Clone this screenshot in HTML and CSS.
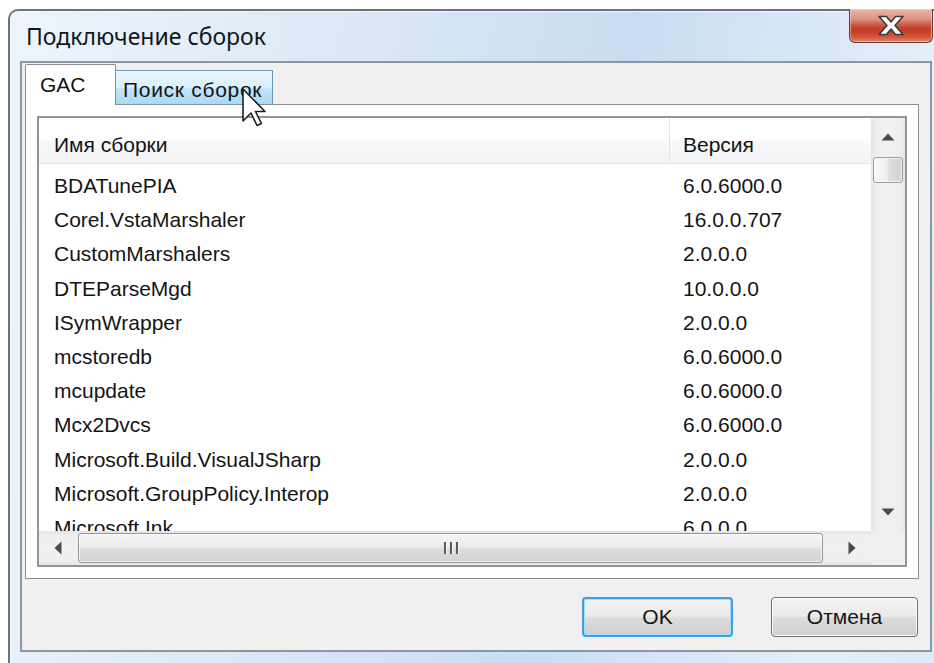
FILE: index.html
```html
<!DOCTYPE html>
<html lang="ru">
<head>
<meta charset="utf-8">
<title>Подключение сборок</title>
<link rel="stylesheet" href="styles.css">
</head>
<body>
<div class="window">
  <div class="titlebar">
    <span class="title">Подключение сборок</span>
    <button class="close" type="button" aria-label="Закрыть">
      <svg width="28" height="21" viewBox="0 0 28 21">
        <polygon points="2,1.5 9.5,1.5 14,7 18.5,1.5 26,1.5 18,10.5 26,19.5 18.5,19.5 14,14 9.5,19.5 2,19.5 10,10.5" fill="#ffffff" stroke="#3c3c3c" stroke-width="1.6" stroke-linejoin="round"/>
      </svg>
    </button>
  </div>
  <div class="frame">
    <div class="client">
      <div class="tabctl">
        <div class="tabstrip">
          <div class="tab tab-active">GAC</div>
          <div class="tab tab-hover">Поиск сборок</div>
        </div>
        <div class="tabpage">
          <div class="listview">
            <div class="lv-body">
              <div class="lv-header">
                <div class="lv-name lv-hcell">Имя сборки</div>
                <div class="lv-ver">Версия</div>
              </div>
              <div class="lv-rows">
                <div class="lv-row"><span class="lv-name">BDATunePIA</span><span class="lv-ver">6.0.6000.0</span></div>
                <div class="lv-row"><span class="lv-name">Corel.VstaMarshaler</span><span class="lv-ver">16.0.0.707</span></div>
                <div class="lv-row"><span class="lv-name">CustomMarshalers</span><span class="lv-ver">2.0.0.0</span></div>
                <div class="lv-row"><span class="lv-name">DTEParseMgd</span><span class="lv-ver">10.0.0.0</span></div>
                <div class="lv-row"><span class="lv-name">ISymWrapper</span><span class="lv-ver">2.0.0.0</span></div>
                <div class="lv-row"><span class="lv-name">mcstoredb</span><span class="lv-ver">6.0.6000.0</span></div>
                <div class="lv-row"><span class="lv-name">mcupdate</span><span class="lv-ver">6.0.6000.0</span></div>
                <div class="lv-row"><span class="lv-name">Mcx2Dvcs</span><span class="lv-ver">6.0.6000.0</span></div>
                <div class="lv-row"><span class="lv-name">Microsoft.Build.VisualJSharp</span><span class="lv-ver">2.0.0.0</span></div>
                <div class="lv-row"><span class="lv-name">Microsoft.GroupPolicy.Interop</span><span class="lv-ver">2.0.0.0</span></div>
                <div class="lv-row"><span class="lv-name">Microsoft.Ink</span><span class="lv-ver">6.0.0.0</span></div>
              </div>
            </div>
            <div class="vscroll">
              <div class="sb-btn-v">
                <svg width="14" height="8" viewBox="0 0 14 8"><polygon points="7,0.5 13.5,7.5 0.5,7.5" fill="#4a4a4a"/></svg>
              </div>
              <div class="vthumb"></div>
              <div class="sb-fill"></div>
              <div class="sb-btn-v">
                <svg width="14" height="8" viewBox="0 0 14 8"><polygon points="0.5,0.5 13.5,0.5 7,7.5" fill="#4a4a4a"/></svg>
              </div>
            </div>
            <div class="hscroll">
              <div class="sb-btn-h sb-left">
                <svg width="8" height="14" viewBox="0 0 8 14"><polygon points="7.5,0.5 7.5,13.5 0.5,7" fill="#4a4a4a"/></svg>
              </div>
              <div class="hthumb">
                <svg width="16" height="14" viewBox="0 0 16 14">
                  <rect x="1" y="1" width="2" height="12" fill="#5a5a5a"/>
                  <rect x="3" y="1" width="1" height="12" fill="#f8f8f8"/>
                  <rect x="7" y="1" width="2" height="12" fill="#5a5a5a"/>
                  <rect x="9" y="1" width="1" height="12" fill="#f8f8f8"/>
                  <rect x="13" y="1" width="2" height="12" fill="#5a5a5a"/>
                  <rect x="15" y="1" width="1" height="12" fill="#f8f8f8"/>
                </svg>
              </div>
              <div class="sb-fill"></div>
              <div class="sb-btn-h sb-right">
                <svg width="8" height="14" viewBox="0 0 8 14"><polygon points="0.5,0.5 7.5,7 0.5,13.5" fill="#4a4a4a"/></svg>
              </div>
            </div>
            <div class="corner"></div>
          </div>
        </div>
      </div>
      <div class="buttons">
        <button class="btn btn-default" type="button">OK</button>
        <button class="btn btn-cancel" type="button">Отмена</button>
      </div>
    </div>
  </div>
</div>
<svg class="cursor" width="26" height="40" viewBox="0 0 26 40">
  <polygon points="1,1 1,33 9,25 15,37.5 19.5,35.5 13.5,23.5 23,23.5" fill="#ffffff" stroke="#1e1e1e" stroke-width="1.6" stroke-linejoin="round"/>
</svg>
</body>
</html>
```

FILE: styles.css
```css
html, body {
  margin: 0;
  padding: 0;
}

body {
  position: relative;
  width: 934px;
  height: 663px;
  overflow: hidden;
  background: #ffffff;
  font-family: "Liberation Sans", Arial, sans-serif;
  color: #141414;
}

/* Aero window frame */
.window {
  box-sizing: border-box;
  width: 936px;
  height: 670px;
  margin: 9px 0 0 8px;
  border: 2px solid #6a737d;
  border-bottom: none;
  border-radius: 10px 10px 0 0;
  background: linear-gradient(100deg, #eef4fb 0%, #e2ecf8 22%, #d3e3f4 45%, #c9dcf1 60%, #d6e6f6 74%, #e3eef9 88%, #dbe8f6 100%);
  box-shadow: inset 0 0 0 1px rgba(255, 255, 255, 0.6);
  display: flex;
  flex-direction: column;
}

.titlebar {
  height: 50px;
  flex: none;
  display: flex;
  align-items: flex-start;
  justify-content: space-between;
  padding-left: 16px;
}

.title {
  font-family: "Noto Sans", "Liberation Sans", sans-serif;
  font-size: 23px;
  line-height: 30px;
  margin-top: 10px;
  color: #101820;
  white-space: nowrap;
}

.close {
  box-sizing: border-box;
  width: 84px;
  height: 34px;
  margin: -2px 9px 0 0;
  padding: 0;
  border: 1px solid #6d3a30;
  border-top: none;
  border-radius: 0 0 6px 6px;
  background: linear-gradient(#eab6aa 0%, #dc9484 30%, #cc5a43 48%, #c23b25 62%, #cf5138 82%, #e3846a 100%);
  box-shadow: inset 0 0 0 1px rgba(255, 220, 210, 0.5);
  display: flex;
  align-items: center;
  justify-content: center;
}

.frame {
  flex: none;
  padding: 0 10px;
}

/* Dialog client area */
.client {
  box-sizing: border-box;
  width: 912px;
  height: 591px;
  border: 2px solid #8c97a4;
  background: #f0f0f0;
  display: flex;
  flex-direction: column;
}

.tabctl {
  margin: 1px 11px 0 3px;
  display: flex;
  flex-direction: column;
}

.tabstrip {
  height: 41px;
  display: flex;
  align-items: flex-end;
}

.tab {
  box-sizing: border-box;
  font-size: 21px;
  line-height: 24px;
  border: 1px solid #898c95;
  border-bottom: none;
  white-space: nowrap;
}

.tab-active {
  position: relative;
  z-index: 1;
  width: 91px;
  height: 41px;
  padding: 8px 0 0 14px;
  background: #ffffff;
  border-radius: 2px 2px 0 0;
}

.tab-hover {
  width: 158px;
  height: 35px;
  margin-left: -1px;
  padding: 7px 0 0 7px;
  letter-spacing: 0.7px;
  border-color: #6f97bd;
  background: linear-gradient(#eaf6fd 0%, #d9f0fc 48%, #c2e4f8 52%, #a9d8f3 100%);
}

.tabpage {
  box-sizing: border-box;
  height: 475px;
  margin-top: -1px;
  border: 1px solid #898c95;
  background: #ffffff;
  padding: 11px;
}

/* List view with scroll bars */
.listview {
  box-sizing: border-box;
  height: 451px;
  border: 2px solid #8f959d;
  background: #ffffff;
  display: grid;
  grid-template-columns: 1fr 34px;
  grid-template-rows: 1fr 34px;
}

.lv-body {
  overflow: hidden;
  font-size: 21px;
  white-space: nowrap;
}

.lv-header {
  box-sizing: border-box;
  height: 46px;
  padding-top: 8px;
  line-height: 37px;
  display: flex;
  border-bottom: 1px solid #e3e5e8;
  background: linear-gradient(#ffffff 0%, #ffffff 45%, #f7f8f9 55%, #f3f4f6 100%);
}

.lv-name {
  box-sizing: border-box;
  flex: none;
  width: 631px;
  padding-left: 15px;
}

.lv-ver {
  box-sizing: border-box;
  flex: none;
  width: 201px;
  padding-left: 13px;
}

.lv-hcell {
  border-right: 1px solid #e1e4e8;
  margin-top: -8px;
  padding-top: 8px;
}

.lv-rows {
  padding-top: 5px;
}

.lv-row {
  display: flex;
  height: 34.2px;
  line-height: 34.2px;
}

.vscroll {
  display: flex;
  flex-direction: column;
  background: linear-gradient(to right, #e3e3e3 0%, #eeeeee 12%, #f1f1f1 50%, #eeeeee 88%, #e4e4e4 100%);
}

.sb-btn-v {
  height: 38px;
  flex: none;
  display: flex;
  align-items: center;
  justify-content: center;
}

.sb-fill {
  flex: 1;
}

.vthumb {
  box-sizing: border-box;
  flex: none;
  height: 26px;
  margin: 1px 2px 0;
  border: 1px solid #999999;
  border-radius: 3px;
  background: linear-gradient(to right, #f7f7f7 0%, #efefef 45%, #dddddd 55%, #d3d3d3 100%);
  box-shadow: inset 0 0 0 1px rgba(255, 255, 255, 0.7);
}

.hscroll {
  display: flex;
  background: linear-gradient(#e3e3e3 0%, #eeeeee 12%, #f1f1f1 50%, #eeeeee 88%, #e4e4e4 100%);
}

.sb-btn-h {
  flex: none;
  display: flex;
  align-items: center;
  justify-content: center;
}

.sb-left {
  width: 38px;
}

.sb-right {
  width: 39px;
}

.hthumb {
  box-sizing: border-box;
  flex: none;
  width: 745px;
  margin: 2px 0 2px 1px;
  border: 1px solid #979797;
  border-radius: 3px;
  background: linear-gradient(#f5f5f5 0%, #ececec 45%, #dcdcdc 55%, #d2d2d2 100%);
  box-shadow: inset 0 0 0 1px rgba(255, 255, 255, 0.7);
  display: flex;
  align-items: center;
  justify-content: center;
}

.corner {
  background: #f0f0f0;
}

/* Dialog buttons */
.buttons {
  display: flex;
  justify-content: flex-end;
  gap: 38px;
  padding: 18px 12px 0 0;
}

.btn {
  box-sizing: border-box;
  height: 40px;
  padding: 0;
  font-family: "Liberation Sans", Arial, sans-serif;
  font-size: 21px;
  color: #141414;
  border: 1px solid #707070;
  border-radius: 4px;
  background: linear-gradient(#f3f3f3 0%, #ebebeb 48%, #dddddd 52%, #cfcfcf 100%);
  box-shadow: inset 0 0 0 1px rgba(255, 255, 255, 0.8);
}

.btn-default {
  width: 151px;
  border: 2px solid #3b9fe2;
  box-shadow: inset 0 0 0 1px #a9dcf7;
}

.btn-cancel {
  width: 147px;
}

/* Mouse pointer over the second tab */
.cursor {
  position: absolute;
  left: 242px;
  top: 88px;
}
```
